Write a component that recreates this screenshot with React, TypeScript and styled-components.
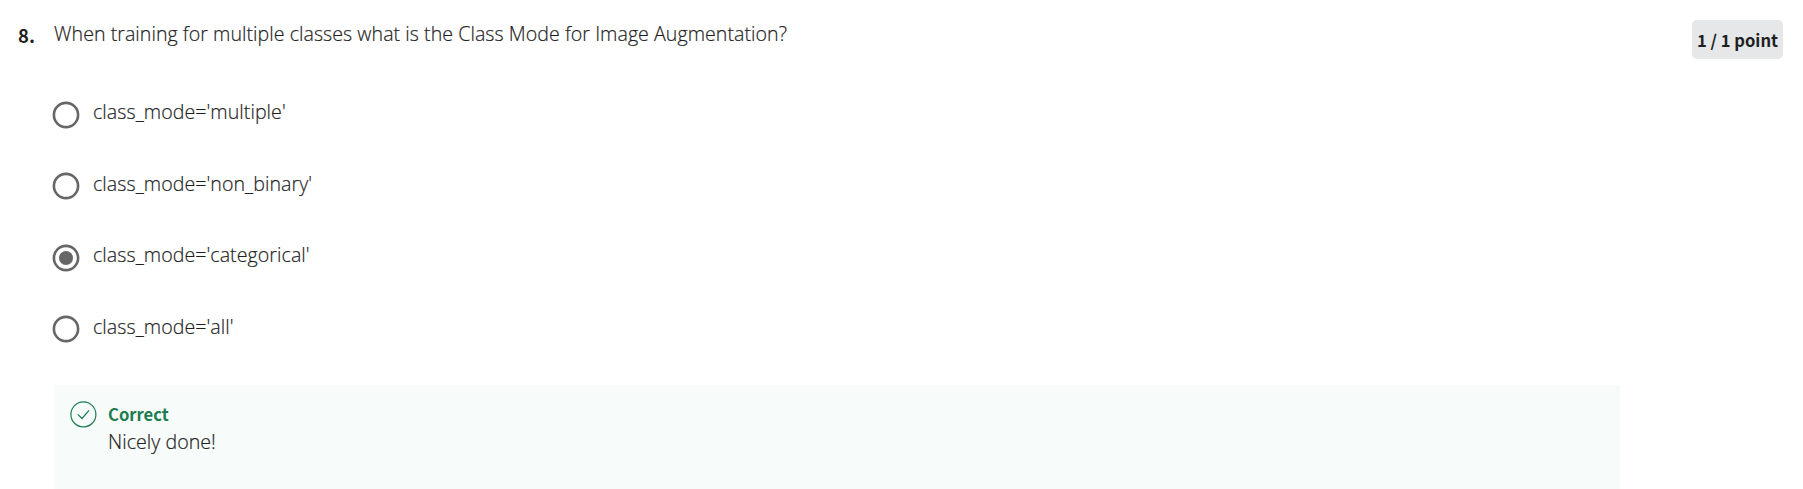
import React from 'react';
import styled, { createGlobalStyle, css } from 'styled-components';

const Global = createGlobalStyle`
  * { box-sizing: border-box; }
  body { margin: 0; background: #fff; color: #1f1f1f; font-family: "Open Sans", "Noto Sans", sans-serif; }
`;
const bodyText = css`
  font-weight: 300; font-size: 19.6px; -webkit-text-stroke: 0.2px #1f1f1f; letter-spacing: 0.04px;
`;
const boldFamily = '"Noto Sans CJK JP", "Noto Sans", sans-serif';
const Question = styled.section`
  display: flex; align-items: flex-start; height: 489px; overflow: hidden; padding: 20px 20px 0 18px;
`;
const Number = styled.div`
  width: 36px; font: 700 18.5px/30px ${boldFamily};
`;
const Body = styled.div`width: 1566px;`;
const Prompt = styled.div`${bodyText} line-height: 28px; white-space: nowrap;`;
const Options = styled.div`padding-top: 51px; height: 337px;`;
const Option = styled.label`
  ${bodyText}
  display: flex; align-items: flex-start; height: 71.6px; line-height: 26px; white-space: nowrap; letter-spacing: 0.06px;
`;
const RadioMark = styled.svg`
  flex: none; width: 28px; height: 28px; margin: 1.7px 13px 0 -2px;
`;
const Feedback = styled.div`
  display: flex; height: 120px; background: #f7fbf9; padding: 16px; gap: 11px;
`;
const Result = styled.div`${bodyText} line-height: 27px;`;
const Verdict = styled.div`
  font: 700 16.6px/26px ${boldFamily}; height: 27px; color: #1d7c50; letter-spacing: 0; -webkit-text-stroke: 0;
`;
const Points = styled.div`
  margin-left: auto; background: #e5e7e8; border-radius: 5px; height: 39px; width: 91px; text-align: center;
  font: 700 16.6px/41px ${boldFamily}; white-space: nowrap;
`;

const options = ["class_mode='multiple'", "class_mode='non_binary'", "class_mode='categorical'", "class_mode='all'"];

function Radio({ checked }: { checked: boolean }) {
  return (
    <RadioMark viewBox="0 0 28 28">
      <circle cx="14" cy="14" r="12.1" fill="none" stroke="#666" strokeWidth="2.6" />
      {checked && <circle cx="14" cy="14" r="7" fill="#666" />}
    </RadioMark>
  );
}

export default function App() {
  return (
    <>
      <Global />
      <Question>
        <Number>8.</Number>
        <Body>
          <Prompt>When training for multiple classes what is the Class Mode for Image Augmentation?</Prompt>
          <Options>
            {options.map((o, i) => <Option key={o}><Radio checked={i === 2} />{o}</Option>)}
          </Options>
          <Feedback>
            <svg width="27" height="27" viewBox="0 0 27 27" fill="none" stroke="#1d7c50" strokeWidth="1.2">
              <circle cx="13.4" cy="13.4" r="12.5" /><path d="M7.8 13.3l4.2 4.2 7-8.2" />
            </svg>
            <Result><Verdict>Correct</Verdict>Nicely done!</Result>
          </Feedback>
        </Body>
        <Points>1 / 1 point</Points>
      </Question>
    </>
  );
}
